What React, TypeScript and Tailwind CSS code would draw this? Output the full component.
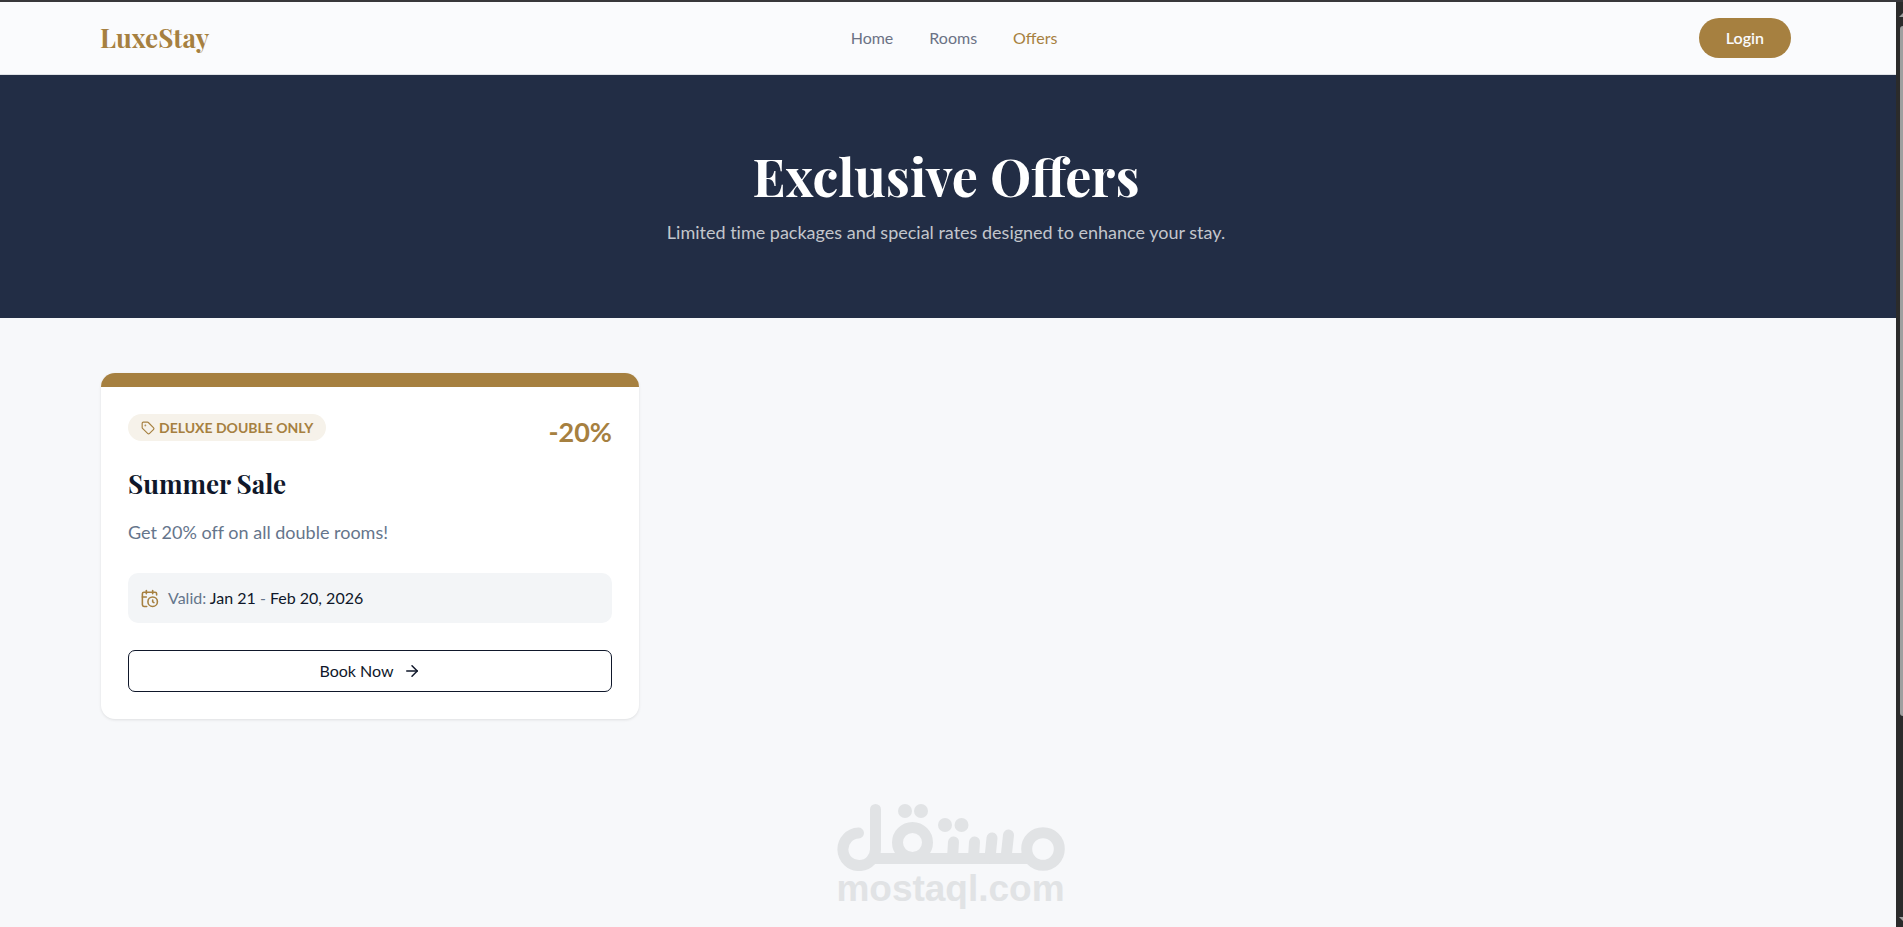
import { ArrowRight, CalendarClock, Tag } from "lucide-react";

type Offer = {
  id: number;
  title: string;
  description: string;
  room: string;
  discount: number;
  from: string;
  to: string;
};

const LINKS = [
  { label: "Home", href: "#home", active: false },
  { label: "Rooms", href: "#rooms", active: false },
  { label: "Offers", href: "#offers", active: true },
];

const OFFERS: Offer[] = [
  {
    id: 1,
    title: "Summer Sale",
    description: "Get 20% off on all double rooms!",
    room: "Deluxe Double Only",
    discount: 20,
    from: "Jan 21",
    to: "Feb 20, 2026",
  },
];

function Navbar() {
  return (
    <header className="flex h-[73px] items-center justify-between border-b border-[#dfe2e6] bg-[#fafbfd] pl-[100px] pr-[105px]">
      <a href="#home" className="font-['Playfair_Display','Liberation_Serif',serif] text-[26px] leading-9 font-bold text-[#a68040]">
        LuxeStay
      </a>
      <nav className="flex items-center gap-9">
        {LINKS.map((link) => (
          <a key={link.label} href={link.href} className={link.active ? "text-[#a68040]" : "text-[#6b7285]"}>
            {link.label}
          </a>
        ))}
      </nav>
      <button type="button" className="h-10 rounded-full bg-[#a68040] px-[27px] font-semibold text-[#fafbfd]">
        Login
      </button>
    </header>
  );
}

function Hero() {
  return (
    <section className="bg-[#222d45] pt-[71px] pr-1 pb-[72px] text-center">
      <h1 className="font-['Playfair_Display','Liberation_Serif',serif] text-[52px] leading-[60px] font-bold text-white">
        Exclusive Offers
      </h1>
      <p className="mt-3 text-[18px] leading-7 text-[#c3c6cc] [font-variant-ligatures:none]">
        Limited time packages and special rates designed to enhance your stay.
      </p>
    </section>
  );
}

function OfferCard({ offer }: { offer: Offer }) {
  return (
    <article className="overflow-hidden rounded-[14px] bg-white shadow-[0_1px_3px_rgba(0,0,0,0.1)]">
      <div className="h-[14px] bg-[#a68040]" />
      <div className="p-[27px]">
        <div className="flex items-start justify-between">
          <span className="flex h-[27px] items-center gap-1 rounded-full bg-[#f6f2ea] px-[13px] text-[14px] font-bold text-[#a68040] uppercase">
            <Tag size={14} />
            {offer.room}
          </span>
          <span className="text-[27px] leading-9 font-bold text-[#a68040]">-{offer.discount}%</span>
        </div>
        <h2 className="mt-4 font-['Playfair_Display','Liberation_Serif',serif] text-[26px] leading-9 font-bold text-[#0f172a]">
          {offer.title}
        </h2>
        <p className="mt-4 text-[18px] leading-7 text-[#65758b] [font-variant-ligatures:none]">{offer.description}</p>
        <div className="mt-[27px] flex h-[50px] items-center gap-[9px] rounded-[10px] bg-[#f3f5f7] px-3 text-[#65758b]">
          <CalendarClock size={19} className="text-[#a68040]" />
          <p>
            Valid: <span className="text-[#0f172a]">{offer.from}</span> - <span className="text-[#0f172a]">{offer.to}</span>
          </p>
        </div>
        <button
          type="button"
          className="mt-[27px] flex h-[42px] w-full items-center justify-center gap-[9px] rounded-[7px] border border-[#0f172a] text-[#0f172a]"
        >
          Book Now
          <ArrowRight size={18} />
        </button>
      </div>
    </article>
  );
}

function Watermark() {
  return (
    <div className="pointer-events-none absolute inset-x-0 bottom-5 flex flex-col items-center pr-[2px] text-[#e1e3e5]">
      <svg width="228" height="67" viewBox="0 0 228 67" fill="none" stroke="currentColor" strokeWidth="11" strokeLinecap="round">
        <path d="M21.500 29A16.300 16.300 0 1 0 38.500 45V5.500" />
        <path d="M34 54.500H195" strokeLinecap="butt" />
        <circle cx="75.500" cy="38.500" r="15" />
        <circle cx="206" cy="45" r="16.300" />
        <path d="M115.500 54L116.500 38M136.500 54L137.500 38M153 54L155 34M169 54L171.500 31" />
        <g fill="currentColor" stroke="none">
          <circle cx="68" cy="7" r="7" />
          <circle cx="84" cy="7" r="7" />
          <circle cx="108" cy="21" r="7" />
          <circle cx="124.500" cy="21" r="7" />
        </g>
      </svg>
      <span className="font-['Liberation_Sans',Arial,sans-serif] text-[37px] leading-9 font-bold">mostaql.com</span>
    </div>
  );
}

function ScrollRail() {
  return (
    <div className="flex w-[7px] shrink-0 flex-col items-end overflow-hidden bg-[#2b2b2b] pt-[11px] pb-[6px]">
      <svg width="4" height="4" viewBox="0 0 4 4" fill="#9f9f9f">
        <path d="M0 4L4 0V4Z" />
      </svg>
      <div className="mt-[9px] mb-auto h-[76%] w-[3px] rounded-l-full bg-[#9f9f9f]" />
      <svg width="4" height="4" viewBox="0 0 4 4" fill="#9f9f9f">
        <path d="M0 0H4V4Z" />
      </svg>
    </div>
  );
}

export default function App() {
  return (
    <div className="relative flex min-h-screen flex-col border-t-2 border-[#38383b] bg-[#f7f8fa] font-[Lato,sans-serif] text-[16px] leading-6">
      <div className="flex flex-1">
        <div className="min-w-0 flex-1">
          <Navbar />
          <main>
            <Hero />
            <section className="grid grid-cols-3 items-start gap-[38px] pt-[55px] pr-[105px] pb-[55px] pl-[101px]">
              {OFFERS.map((offer) => (
                <OfferCard key={offer.id} offer={offer} />
              ))}
            </section>
          </main>
        </div>
        <ScrollRail />
      </div>
      <Watermark />
    </div>
  );
}
